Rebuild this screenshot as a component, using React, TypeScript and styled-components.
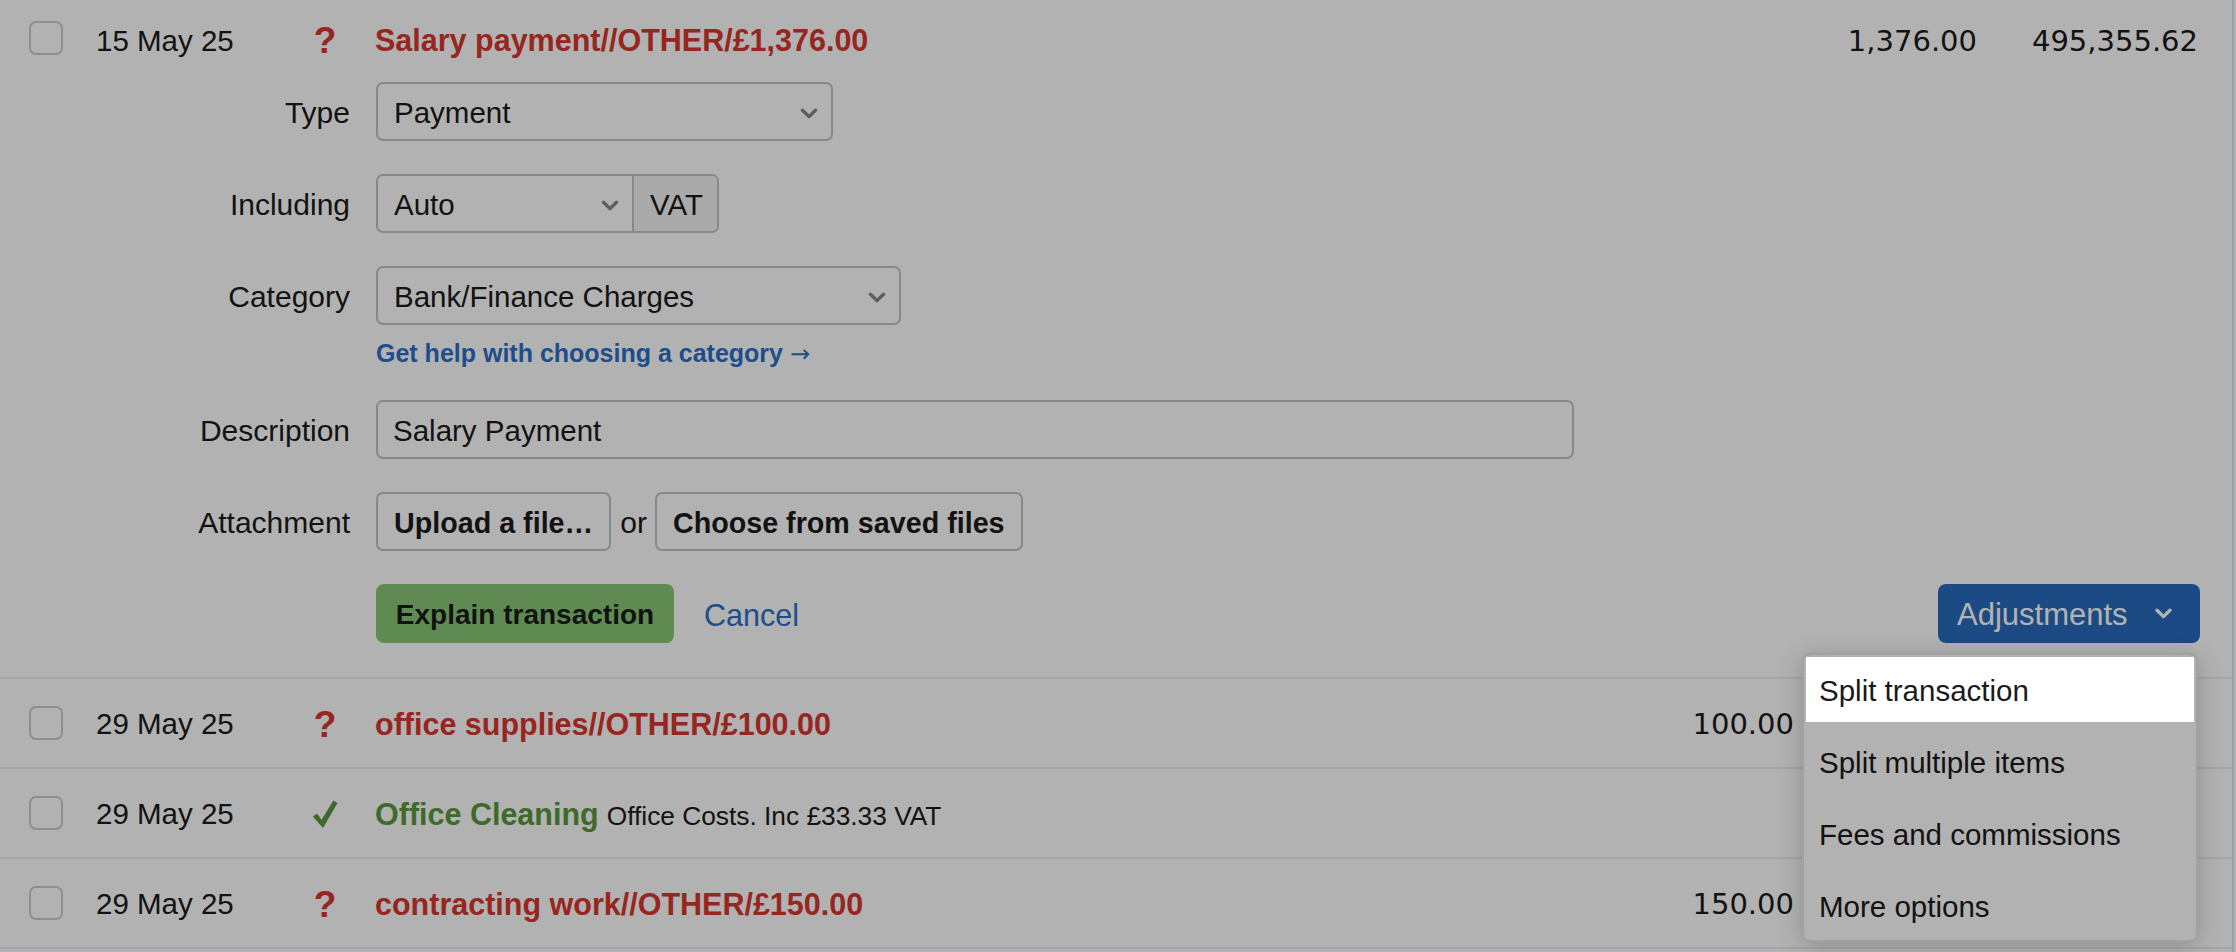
import React from "react";
import styled, { createGlobalStyle } from "styled-components";

const GlobalStyle = createGlobalStyle`
  html, body { margin: 0; padding: 0; background: #ffffff; }
  body {
    font-family: "Liberation Sans", Arial, sans-serif;
    color: #1a1a1a;
    overflow: hidden;
  }
  * { box-sizing: border-box; }
`;

const Table = styled.div`
  width: 2234px;
  min-height: 952px;
  border-right: 2px solid #dde5f0;
`;

const Row = styled.div<{ $expanded?: boolean }>`
  border-bottom: 2px solid #eaecf3;
  padding-bottom: ${(p) => (p.$expanded ? "34px" : "0")};
`;

const RowHead = styled.div<{ $h: number; $textDrop?: number }>`
  display: grid;
  grid-template-columns: 67px 214px 30px 1fr 183px 183px 221px;
  align-items: center;
  height: ${(p) => p.$h}px;
  padding: 0 34px 0 29px;

  & > :not(:first-child) {
    padding-top: ${(p) => p.$textDrop ?? 0}px;
  }
`;

const CheckBox = styled.span`
  display: block;
  width: 34px;
  height: 34px;
  border: 2px solid #c8cdd3;
  border-radius: 7px;
  background: #ffffff;
`;

const DateCell = styled.span`
  font-size: 29.5px;
  color: #1a1a1a;
`;

const StatusCell = styled.span`
  display: flex;
  justify-content: center;
  align-items: center;
`;

const Question = styled.span`
  font-family: "Liberation Sans", Arial, sans-serif;
  font-weight: 700;
  font-size: 37px;
  line-height: 1;
  color: #d8362e;
`;

const TitleCell = styled.span`
  padding-left: 35px;
  white-space: nowrap;
`;

const Title = styled.span<{ $tone: "red" | "green" }>`
  font-weight: 700;
  font-size: 30.5px;
  color: ${(p) => (p.$tone === "red" ? "#d8362e" : "#5a9940")};
`;

const Note = styled.span`
  font-size: 26.3px;
  color: #1a1a1a;
  margin-left: 8px;
`;

const Amount = styled.span`
  font-family: "DejaVu Sans", Verdana, sans-serif;
  font-size: 29px;
  text-align: right;
  color: #1a1a1a;
`;

const Form = styled.div`
  display: grid;
  grid-template-columns: 350px 1fr;
  column-gap: 26px;
  row-gap: 33px;
  margin-top: 6px;
  padding-right: 32px;
`;

const Label = styled.div`
  height: 59px;
  display: flex;
  align-items: center;
  justify-content: flex-end;
  padding-top: 3px;
  font-size: 30px;
  color: #1a1a1a;
`;

const Field = styled.div`
  display: flex;
  flex-direction: column;
  align-items: flex-start;
`;

const Select = styled.div<{ $w: number }>`
  width: ${(p) => p.$w}px;
  height: 59px;
  display: flex;
  align-items: center;
  justify-content: space-between;
  padding: 3px 13px 0 16px;
  border: 2px solid #bec4cb;
  border-radius: 7px;
  background: #ffffff;
  font-size: 29.5px;
  color: #1a1a1a;
`;

const Group = styled.div`
  display: flex;
  height: 59px;
  border: 2px solid #bec4cb;
  border-radius: 7px;
  overflow: hidden;
  background: #ffffff;
`;

const GroupSelect = styled.div`
  width: 254px;
  display: flex;
  align-items: center;
  justify-content: space-between;
  padding: 3px 13px 0 16px;
  font-size: 29.5px;
`;

const Addon = styled.div`
  display: flex;
  align-items: center;
  padding: 3px 14px 0 16px;
  border-left: 2px solid #bec4cb;
  background: #f4f4f4;
  font-size: 29.5px;
`;

const HelpLink = styled.a`
  margin-top: 15px;
  font-size: 25px;
  line-height: 26px;
  font-weight: 700;
  color: #2b6fc8;
  text-decoration: none;
`;

const Arrow = styled.span`
  font-family: "DejaVu Sans", sans-serif;
  font-weight: 400;
  font-size: 24px;
`;

const TextInput = styled.div`
  width: 1198px;
  height: 59px;
  display: flex;
  align-items: center;
  padding: 3px 0 0 15px;
  border: 2px solid #bec4cb;
  border-radius: 7px;
  background: #ffffff;
  font-size: 29.5px;
`;

const Inline = styled.div`
  display: flex;
  align-items: center;
`;

const FileButton = styled.button`
  height: 59px;
  padding: 3px 16px 0;
  border: 2px solid #bec4cb;
  border-radius: 7px;
  background: #ffffff;
  font-family: "Liberation Sans", Arial, sans-serif;
  font-weight: 700;
  font-size: 28.7px;
  color: #1a1a1a;
`;

const Or = styled.span`
  font-size: 30px;
  padding-top: 3px;
  margin: 0 8px 0 9px;
`;

const Actions = styled.div`
  display: flex;
  align-items: center;
`;

const PrimaryButton = styled.button`
  height: 59px;
  width: 298px;
  padding-top: 3px;
  border: none;
  border-radius: 8px;
  background: #89c878;
  font-family: "Liberation Sans", Arial, sans-serif;
  font-weight: 700;
  font-size: 28px;
  color: #1a1a1a;
`;

const CancelLink = styled.a`
  margin-left: 30px;
  padding-top: 3px;
  font-size: 30.5px;
  color: #2b6fc8;
  text-decoration: none;
`;

const AdjWrap = styled.div`
  position: relative;
  margin-left: auto;
`;

const AdjButton = styled.button`
  height: 59px;
  width: 262px;
  display: flex;
  align-items: center;
  gap: 26px;
  padding: 3px 0 0 19px;
  border: none;
  border-radius: 8px;
  background: #286abd;
  font-family: "Liberation Sans", Arial, sans-serif;
  font-size: 31px;
  color: #ffffff;

  & > svg {
    margin-top: -3px;
  }
`;

const Menu = styled.div`
  position: absolute;
  top: calc(100% + 10px);
  right: 2px;
  z-index: 10;
  width: 396px;
  padding: 2px;
  border: 2px solid #e4e7ea;
  border-radius: 8px;
  background: #ffffff;
  box-shadow: 0 4px 26px rgba(0, 0, 0, 0.2);
  display: flex;
  flex-direction: column;
  gap: 7px;
`;

const MenuItem = styled.div<{ $spot?: boolean }>`
  height: 65px;
  display: flex;
  align-items: center;
  padding: 3px 0 0 13px;
  font-size: 29.5px;
  color: #1a1a1a;
  background: #ffffff;
  ${(p) =>
    p.$spot
      ? `position: relative; z-index: 1; box-shadow: 0 0 0 4000px rgba(0, 0, 0, 0.3);`
      : ""}
`;

const Chevron = ({ color, w = 18, h = 11 }: { color: string; w?: number; h?: number }) => (
  <svg width={w} height={h} viewBox="0 0 18 11" aria-hidden>
    <path
      d="M2.5 2.2 L9 8.6 L15.5 2.2"
      fill="none"
      stroke={color}
      strokeWidth="3.4"
      strokeLinecap="round"
      strokeLinejoin="round"
    />
  </svg>
);

const Tick = () => (
  <svg width="27" height="29" viewBox="0 0 27 29" aria-hidden>
    <path d="M0.8 16.4 L5 13.6 L9.6 19.8 L21.4 0.6 L25.6 3 L11 28 Z" fill="#5a9940" />
  </svg>
);

type Tx = {
  date: string;
  status: "q" | "ok";
  title: string;
  note?: string;
  a1?: string;
  a2?: string;
  a3?: string;
};

const others: Tx[] = [
  { date: "29 May 25", status: "q", title: "office supplies//OTHER/£100.00", a1: "100.00" },
  { date: "29 May 25", status: "ok", title: "Office Cleaning", note: "Office Costs. Inc £33.33 VAT" },
  { date: "29 May 25", status: "q", title: "contracting work//OTHER/£150.00", a1: "150.00" },
];

const Head = ({ tx, h, drop }: { tx: Tx; h: number; drop?: number }) => (
  <RowHead $h={h} $textDrop={drop}>
    <CheckBox />
    <DateCell>{tx.date}</DateCell>
    <StatusCell>{tx.status === "q" ? <Question>?</Question> : <Tick />}</StatusCell>
    <TitleCell>
      <Title $tone={tx.status === "q" ? "red" : "green"}>{tx.title}</Title>
      {tx.note && <Note>{tx.note}</Note>}
    </TitleCell>
    <Amount>{tx.a1 ?? ""}</Amount>
    <Amount>{tx.a2 ?? ""}</Amount>
    <Amount>{tx.a3 ?? ""}</Amount>
  </RowHead>
);

export default function App() {
  const first: Tx = {
    date: "15 May 25",
    status: "q",
    title: "Salary payment//OTHER/£1,376.00",
    a2: "1,376.00",
    a3: "495,355.62",
  };
  return (
    <>
      <GlobalStyle />
      <Table>
        <Row $expanded>
          <Head tx={first} h={76} drop={5} />
          <Form>
            <Label>Type</Label>
            <Field>
              <Select $w={457}>
                <span>Payment</span>
                <Chevron color="#818992" />
              </Select>
            </Field>

            <Label>Including</Label>
            <Field>
              <Group>
                <GroupSelect>
                  <span>Auto</span>
                  <Chevron color="#818992" />
                </GroupSelect>
                <Addon>VAT</Addon>
              </Group>
            </Field>

            <Label>Category</Label>
            <Field>
              <Select $w={525}>
                <span>Bank/Finance Charges</span>
                <Chevron color="#818992" />
              </Select>
              <HelpLink>
                Get help with choosing a category <Arrow>→</Arrow>
              </HelpLink>
            </Field>

            <Label>Description</Label>
            <Field>
              <TextInput>Salary Payment</TextInput>
            </Field>

            <Label>Attachment</Label>
            <Field>
              <Inline>
                <FileButton>Upload a file…</FileButton>
                <Or>or</Or>
                <FileButton>Choose from saved files</FileButton>
              </Inline>
            </Field>

            <span />
            <Actions>
              <PrimaryButton>Explain transaction</PrimaryButton>
              <CancelLink>Cancel</CancelLink>
              <AdjWrap>
                <AdjButton>
                  <span>Adjustments</span>
                  <Chevron color="#ffffff" w={19} h={11} />
                </AdjButton>
                <Menu>
                  <MenuItem $spot>Split transaction</MenuItem>
                  <MenuItem>Split multiple items</MenuItem>
                  <MenuItem>Fees and commissions</MenuItem>
                  <MenuItem>More options</MenuItem>
                </Menu>
              </AdjWrap>
            </Actions>
          </Form>
        </Row>
        {others.map((tx, i) => (
          <Row key={i}>
            <Head tx={tx} h={88} drop={2} />
          </Row>
        ))}
      </Table>
    </>
  );
}
